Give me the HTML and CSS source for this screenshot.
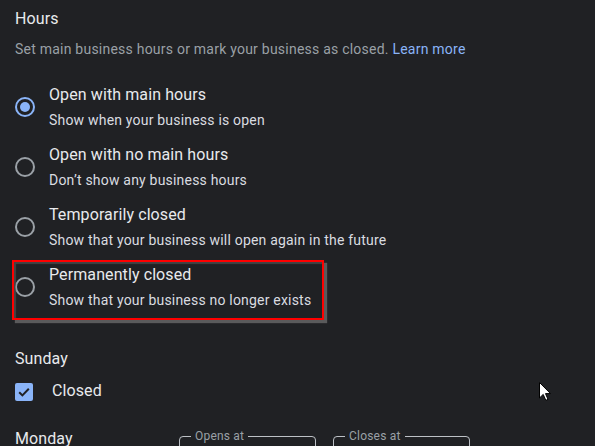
FILE: index.html
```html
<!DOCTYPE html>
<html>
<head>
<meta charset="utf-8">
<link rel="stylesheet" href="styles.css">
</head>
<body>
<main class="page">
  <h2 class="title">Hours</h2>
  <p class="desc">Set main business hours or mark your business as closed. <a class="link" href="#">Learn more</a></p>

  <div class="options">
    <div class="option">
      <span class="radio checked"></span>
      <div class="option-text">
        <div class="option-title">Open with main hours</div>
        <div class="option-sub">Show when your business is open</div>
      </div>
    </div>
    <div class="option">
      <span class="radio"></span>
      <div class="option-text">
        <div class="option-title">Open with no main hours</div>
        <div class="option-sub">Don’t show any business hours</div>
      </div>
    </div>
    <div class="option">
      <span class="radio"></span>
      <div class="option-text">
        <div class="option-title">Temporarily closed</div>
        <div class="option-sub">Show that your business will open again in the future</div>
      </div>
    </div>
    <div class="option highlighted">
      <span class="radio"></span>
      <div class="option-text">
        <div class="option-title">Permanently closed</div>
        <div class="option-sub">Show that your business no longer exists</div>
      </div>
    </div>
  </div>

  <section class="day">
    <div class="day-name">Sunday</div>
    <label class="check-row">
      <span class="checkbox">
        <svg width="18" height="18" viewBox="0 0 18 18"><path d="M4.2 9.2l3.2 3.2 6.4-6.6" fill="none" stroke="#202124" stroke-width="2"/></svg>
      </span>
      <span class="check-label">Closed</span>
    </label>
  </section>

  <section class="day-row">
    <div class="day-name day-col">Monday</div>
    <fieldset class="field"><legend>Opens at</legend></fieldset>
    <fieldset class="field"><legend>Closes at</legend></fieldset>
  </section>
</main>

<svg class="cursor" width="13" height="20" viewBox="0 0 13 20">
  <path d="M0.5 0.5 L0.5 16 L4.2 12.4 L6.8 18.3 L9 17.4 L6.5 11.6 L11.5 11.6 Z" fill="#ffffff" stroke="#000000" stroke-width="1"/>
</svg>
</body>
</html>
```

FILE: styles.css
```css
html, body {
  margin: 0;
  padding: 0;
  background: #202124;
}

body {
  width: 595px;
  height: 446px;
  overflow: hidden;
  position: relative;
  font-family: Roboto, "Liberation Sans", sans-serif;
  color: #e8eaed;
}

.page {
  padding: 7px 0 0 15px;
  display: flex;
  flex-direction: column;
}

.title {
  margin: 0;
  font-size: 16px;
  line-height: 24px;
  font-weight: 400;
  letter-spacing: 0.1px;
  color: #e8eaed;
}

.desc {
  margin: 8px 0 0;
  font-size: 14px;
  line-height: 20px;
  letter-spacing: 0.23px;
  color: #9aa0a6;
}

.link {
  color: #8ab4f8;
  text-decoration: none;
}

.options {
  margin-top: 24px;
  display: flex;
  flex-direction: column;
  gap: 13px;
}

.option {
  position: relative;
  display: flex;
  align-items: flex-start;
  gap: 14px;
  height: 47px;
}

.radio {
  box-sizing: border-box;
  flex: none;
  width: 20px;
  height: 20px;
  margin-top: 14px;
  border: 2px solid #9aa0a6;
  border-radius: 50%;
  display: flex;
  align-items: center;
  justify-content: center;
}

.radio.checked {
  border-color: #8ab4f8;
}

.radio.checked::after {
  content: "";
  width: 10px;
  height: 10px;
  border-radius: 50%;
  background: #8ab4f8;
}

.option-title {
  font-size: 16px;
  line-height: 24px;
  letter-spacing: 0.1px;
  color: #e8eaed;
}

.option-sub {
  margin-top: 3px;
  font-size: 14px;
  line-height: 20px;
  letter-spacing: 0.2px;
  color: #dadce0;
}

.highlighted::after {
  content: "";
  position: absolute;
  left: -3px;
  top: -3px;
  width: 308px;
  height: 56px;
  border: 2px solid #ff0000;
  box-shadow: 3px 3px 1px rgba(110, 110, 110, 0.75), inset 2px 2px 1px rgba(90, 90, 90, 0.6);
  pointer-events: none;
}

.day {
  margin-top: 37px;
  display: flex;
  flex-direction: column;
}

.day-name {
  font-size: 16px;
  line-height: 24px;
  letter-spacing: 0.1px;
  color: #e8eaed;
}

.check-row {
  margin-top: 9px;
  display: flex;
  align-items: center;
  height: 24px;
  gap: 19px;
}

.checkbox {
  width: 18px;
  height: 18px;
  border-radius: 2px;
  background: #8ab4f8;
  display: flex;
}

.check-label {
  font-size: 16px;
  line-height: 24px;
  letter-spacing: 0.1px;
  color: #e8eaed;
  position: relative;
  top: -1px;
}

.day-row {
  margin-top: 23px;
  display: flex;
  align-items: flex-start;
  gap: 17px;
}

.day-col {
  width: 147px;
}

.field {
  box-sizing: border-box;
  width: 137px;
  height: 56px;
  margin: 1px 0 0;
  padding: 0 0 0 11px;
  border: 1px solid #bdc1c6;
  border-radius: 4px;
}

.field legend {
  padding: 0 4px;
  font-size: 12px;
  line-height: 16px;
  letter-spacing: 0.2px;
  color: #9aa0a6;
}

.cursor {
  position: absolute;
  left: 539px;
  top: 382px;
}
```
